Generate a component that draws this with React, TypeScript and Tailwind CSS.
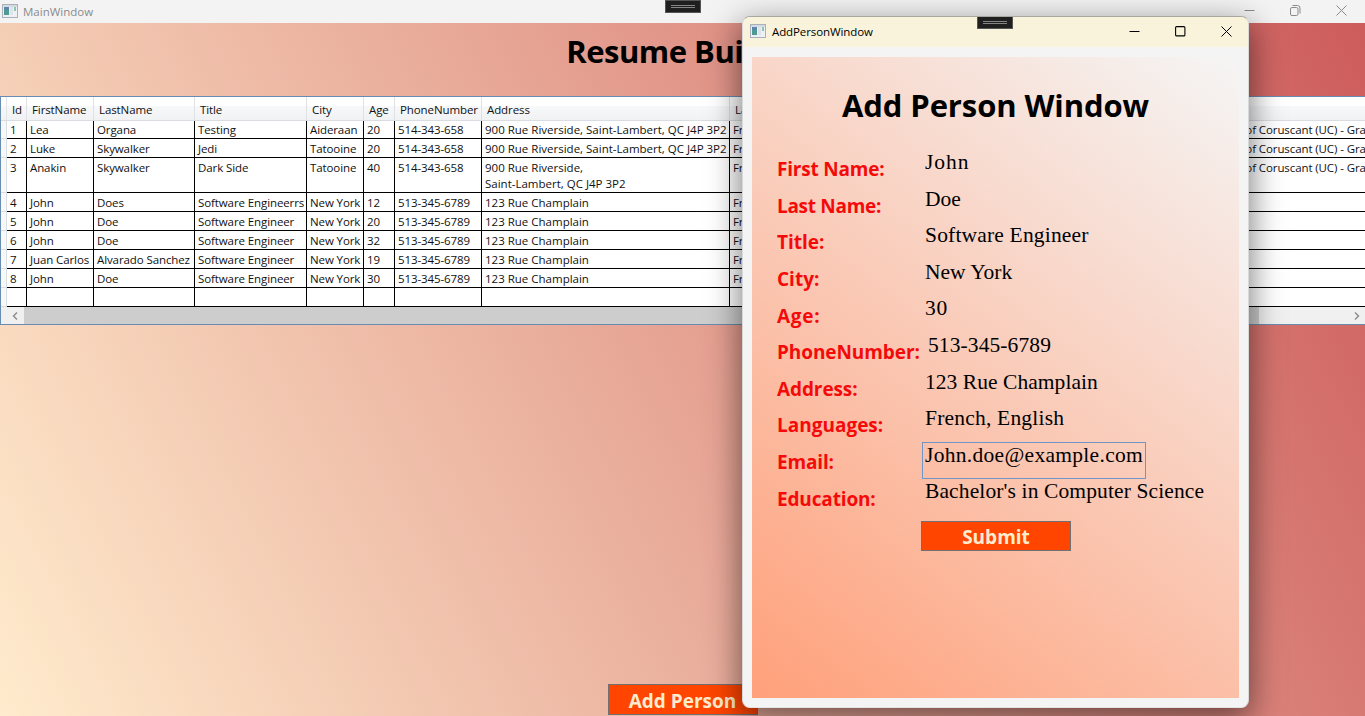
import React from "react";

const columns = ["Id", "FirstName", "LastName", "Title", "City", "Age", "PhoneNumber", "Address", "Languages", "Email", "Education"];

const home = "900 Rue Riverside, Saint-Lambert, QC J4P 3P2";
const school = "University of Coruscant (UC) - Graduate";

const people: string[][] = [
  ["1", "Lea", "Organa", "Testing", "Aideraan", "20", "514-343-658", home, "French", "", school],
  ["2", "Luke", "Skywalker", "Jedi", "Tatooine", "20", "514-343-658", home, "French", "", school],
  ["3", "Anakin", "Skywalker", "Dark Side", "Tatooine", "40", "514-343-658", "900 Rue Riverside,\nSaint-Lambert, QC J4P 3P2", "French", "", school],
  ["4", "John", "Does", "Software Engineerrs", "New York", "12", "513-345-6789", "123 Rue Champlain", "French", "", ""],
  ["5", "John", "Doe", "Software Engineer", "New York", "20", "513-345-6789", "123 Rue Champlain", "French", "", ""],
  ["6", "John", "Doe", "Software Engineer", "New York", "32", "513-345-6789", "123 Rue Champlain", "French", "", ""],
  ["7", "Juan Carlos", "Alvarado Sanchez", "Software Engineer", "New York", "19", "513-345-6789", "123 Rue Champlain", "French", "", ""],
  ["8", "John", "Doe", "Software Engineer", "New York", "30", "513-345-6789", "123 Rue Champlain", "French", "", ""],
  ["", "", "", "", "", "", "", "", "", "", ""],
];

const fields: { label: string; value: string; tracking: string; labelTracking: string }[] = [
  { label: "First Name:", value: "John", tracking: "tracking-[1px]", labelTracking: "tracking-[-0.2px]" },
  { label: "Last Name:", value: "Doe", tracking: "", labelTracking: "tracking-[-0.3px]" },
  { label: "Title:", value: "Software Engineer", tracking: "tracking-[0.18px]", labelTracking: "" },
  { label: "City:", value: "New York", tracking: "", labelTracking: "" },
  { label: "Age:", value: "30", tracking: "tracking-[0.8px]", labelTracking: "tracking-[0.7px]" },
  { label: "PhoneNumber:", value: "513-345-6789", tracking: "tracking-[0.1px]", labelTracking: "tracking-[-0.08px]" },
  { label: "Address:", value: "123 Rue Champlain", tracking: "tracking-[0.05px]", labelTracking: "tracking-[-0.1px]" },
  { label: "Languages:", value: "French, English", tracking: "tracking-[0.2px]", labelTracking: "" },
  { label: "Email:", value: "John.doe@example.com", tracking: "tracking-[0.3px]", labelTracking: "tracking-[-0.15px]" },
  { label: "Education:", value: "Bachelor's in Computer Science", tracking: "tracking-[0.12px]", labelTracking: "tracking-[-0.15px]" },
];

const gridCols = "grid grid-cols-[6px_20px_67px_101px_112px_57px_31px_87px_248px_120px_336px_400px]";

function AppIcon() {
  return (
    <svg width="16" height="14" viewBox="0 0 16 14" className="shrink-0">
      <rect x="0.5" y="0.5" width="15" height="13" fill="#eef1f4" stroke="#a9b0ba" />
      <rect x="1" y="1" width="14" height="2" fill="#d3dae3" />
      <rect x="2" y="3" width="5" height="8" fill="#4f9a94" />
      <rect x="2" y="3" width="5" height="3" fill="#5c86a8" />
      <rect x="8" y="3" width="3" height="8" fill="#dfe4ea" />
      <rect x="12" y="3" width="2" height="4" fill="#8fc3ae" />
    </svg>
  );
}

function DebugTab() {
  return (
    <div className="flex h-[13px] w-9 flex-col items-center justify-center gap-px border border-[#555] bg-[#1f1f1f]">
      <div className="h-px w-6 bg-[#858585]" />
      <div className="h-px w-6 bg-[#858585]" />
    </div>
  );
}

function WindowButtons({ restore }: { restore?: boolean }) {
  return (
    <div className="flex items-center gap-[35px]">
      <svg width="11" height="11" viewBox="0 0 11 11" fill="none" stroke="currentColor"><path d="M0.5 5.5h10" /></svg>
      {restore ? (
        <svg width="11" height="11" viewBox="0 0 11 11" fill="none" stroke="currentColor">
          <rect x="0.5" y="2.5" width="7.5" height="8" rx="1.5" />
          <path d="M2.5 0.5h5a2.5 2.5 0 0 1 2.5 2.5v5.5" />
        </svg>
      ) : (
        <svg width="11" height="11" viewBox="0 0 11 11" fill="none" stroke="currentColor"><rect x="0.6" y="0.6" width="9.3" height="9.3" rx="1" strokeWidth="1.1" /></svg>
      )}
      <svg width="11" height="11" viewBox="0 0 11 11" fill="none" stroke="currentColor"><path d="M0.5 0.5l10 10M10.5 0.5l-10 10" /></svg>
    </div>
  );
}

function PeopleGrid() {
  return (
    <div className="h-[229px] w-[1366px] overflow-hidden border border-[#688caf] bg-white text-[11.5px] leading-4 tracking-[-0.1px] text-[#111]">
      <div className={`${gridCols} h-6 border-b border-[#d9dce0] bg-[linear-gradient(#fff_0,#fff_9px,#f7f8fa_9px,#f0f2f4_23px)]`}>
        <div className="border-r border-[#e2e4e7]" />
        {columns.map((c) => (
          <div key={c} className="overflow-hidden whitespace-nowrap border-r border-[#dfe1e4] pl-[5px] pt-[5px]">{c}</div>
        ))}
      </div>
      {people.map((row, r) => (
        <div key={r} className={`${gridCols} ${r === 0 ? "h-[18px]" : r === 2 ? "h-[35px]" : "h-[19px]"}`}>
          <div className="border-b border-r border-[#d9dce0] bg-[#f7f8fa]" />
          {row.map((v, c) => (
            <div
              key={c}
              className={`overflow-hidden whitespace-pre border-b border-r border-black ${c === 10 ? "pl-1" : "pl-[3px]"} ${r === 0 ? "pt-px" : "pt-0.5"} ${c === 7 ? "tracking-[0px]" : ""}`}
            >
              {v}
            </div>
          ))}
        </div>
      ))}
      <div className="flex h-[17px] items-center bg-[#f0f0f0] text-[#8a8a8a]">
        <div className="flex w-[23px] justify-center pl-[5px]">
          <svg width="6" height="8" viewBox="0 0 6 8" fill="none" stroke="currentColor" strokeWidth="1.4"><path d="M5 0.5L1.5 4L5 7.5" /></svg>
        </div>
        <div className="h-full w-[1235px] bg-[#cdcdcd]" />
        <div className="flex grow justify-end pr-[5px]">
          <svg width="6" height="8" viewBox="0 0 6 8" fill="none" stroke="currentColor" strokeWidth="1.4"><path d="M1 0.5L4.5 4L1 7.5" /></svg>
        </div>
      </div>
    </div>
  );
}

function AddPersonDialog() {
  return (
    <div className="absolute left-[742px] top-4 flex h-[692px] w-[507px] flex-col overflow-hidden rounded-lg border border-[#a8a8a0] border-b-[#e4e4e4] border-r-[#d8d8d8] border-l-[#d8d8d8] bg-[#f4f4f4] shadow-[0_10px_32px_2px_rgba(0,0,0,0.5)]">
      <div className="flex h-[30px] shrink-0 items-center justify-between bg-[#f8f3da] pb-0.5 pl-[7px] pr-4 text-black">
        <div className="flex w-[227px] items-center gap-1.5 text-[11.5px] tracking-[-0.1px]">
          <AppIcon />
          <span className="mt-0.5">AddPersonWindow</span>
        </div>
        <div className="mr-auto -mt-px self-start"><DebugTab /></div>
        <WindowButtons />
      </div>
      <div className="mx-[9px] mt-[10px] h-[641px] w-[487px] shrink-0 bg-[linear-gradient(37.23deg,#ffa07a,#f5f5f5)] pt-6">
        <h2 className="text-center text-[31px] font-bold leading-[48px] tracking-[-0.1px] text-black">Add Person Window</h2>
        <div className="mt-[20px] pl-[25px]">
          {fields.map((f) => (
            <div key={f.label} className="flex h-[36.6px]">
              <div className={`w-[145px] shrink-0 whitespace-nowrap pt-[6.2px] text-[19px] font-bold leading-7 text-[#f50a0a] ${f.labelTracking}`}>{f.label}</div>
              <div className={`whitespace-nowrap border px-[2px] font-['Liberation_Serif',serif] text-[21.5px] leading-6 text-black ${f.label === "Email:" ? "h-[37px] border-[#7295c8]" : "border-transparent"} ${f.label === "PhoneNumber:" ? "ml-[3px]" : ""} ${f.tracking}`}>{f.value}</div>
            </div>
          ))}
        </div>
        <button className="ml-[169px] mt-[6px] block h-[30px] w-[150px] border border-[#707070] bg-[#ff4500] pt-0.5 text-[19px] font-bold leading-[26px] text-[#ffebcd]">Submit</button>
      </div>
    </div>
  );
}

export default function App() {
  return (
    <div className="relative flex h-[716px] w-[1365px] flex-col overflow-hidden font-['Open_Sans',sans-serif]">
      <header className="flex h-[23px] shrink-0 items-center justify-between bg-[#f3f3f3] pl-0.5 pr-[18px] text-[#8b8b8b]">
        <div className="-mt-px flex w-[663px] items-center gap-[5px] text-[11.5px]">
          <AppIcon />
          <span className="mt-0.5">MainWindow</span>
        </div>
        <div className="mr-auto self-start"><DebugTab /></div>
        <div className="-mt-[3px]"><WindowButtons restore /></div>
      </header>
      <main className="flex grow flex-col bg-[linear-gradient(63.08deg,#ffebcd,#cd5c5c)]">
        <h1 className="h-[73px] pl-1 pt-1 text-center text-[31px] font-bold leading-[48px] tracking-[-0.5px] text-black">Resume Builder</h1>
        <PeopleGrid />
        <button className="mb-px mt-auto h-[31px] w-[150px] self-center border border-[#707070] bg-[#ff4500] pt-[3px] text-[19px] font-bold leading-[26px] text-[#ffebcd]">Add Person</button>
      </main>
      <AddPersonDialog />
    </div>
  );
}
